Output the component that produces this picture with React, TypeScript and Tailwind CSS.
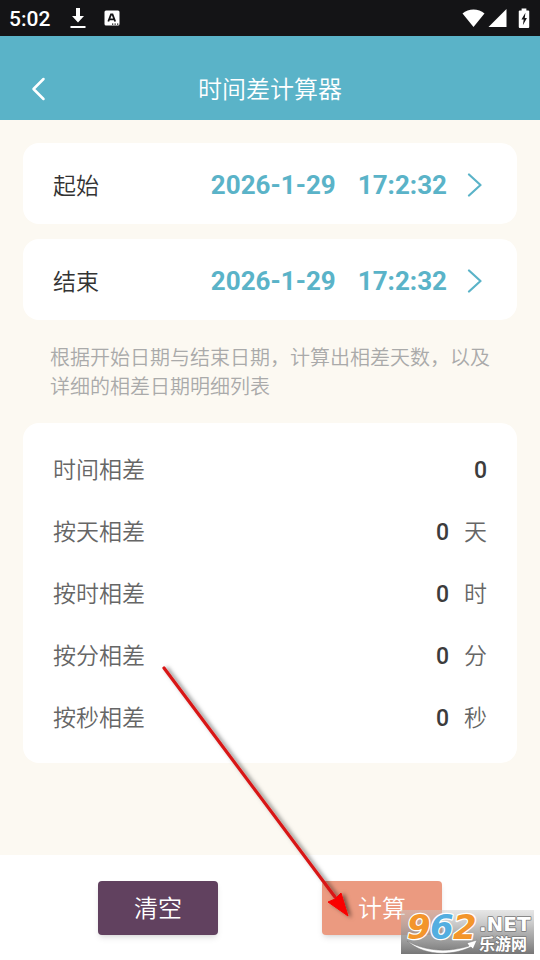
import React from "react";

type DateField = { id: string; label: string; date: string; time: string };
type ResultRow = { label: string; value: string; unit?: string };

const dateFields: DateField[] = [
  { id: "start", label: "起始", date: "2026-1-29", time: "17:2:32" },
  { id: "end", label: "结束", date: "2026-1-29", time: "17:2:32" },
];

const resultRows: ResultRow[] = [
  { label: "时间相差", value: "0" },
  { label: "按天相差", value: "0", unit: "天" },
  { label: "按时相差", value: "0", unit: "时" },
  { label: "按分相差", value: "0", unit: "分" },
  { label: "按秒相差", value: "0", unit: "秒" },
];

function StatusBar() {
  return (
    <div className="flex h-9 items-center justify-between bg-[#141416] pr-[10px] pl-[9px] text-white">
      <div className="flex items-center">
        <span className="pt-px text-[21px] leading-6 font-medium">5:02</span>
        <svg className="ml-5 h-5 w-4" viewBox="0 0 16 20" fill="currentColor" aria-hidden="true">
          <path d="M6 0h4v8h4l-6 6.500-6-6.500h4z" />
          <path d="M.500 18h15v2H.500z" />
        </svg>
        <svg className="ml-[18px] h-4 w-4" viewBox="0 0 16 16" aria-hidden="true">
          <rect x=".5" y=".5" width="15" height="15" rx="1.500" fill="#fff" />
          <path d="M4.300 11.500 7 4.500h1.500l2.700 7M5.500 9.300h4.500" fill="none" stroke="#141416" strokeWidth="1.800" />
          <path d="M8 13.500h1.300v1.300H8zM10.500 13.500h1.300v1.300h-1.300zM13 13.500h1.300v1.300H13z" fill="#141416" />
        </svg>
      </div>
      <div className="flex items-center">
        <svg className="h-5 w-[23px]" viewBox="0 0 23 20" fill="currentColor" aria-hidden="true">
          <path d="M.500 5.500C6.500.300 16.500.300 22.500 5.500L11.500 19z" />
        </svg>
        <svg className="ml-[3px] h-5 w-[19px]" viewBox="0 0 19 20" fill="currentColor" aria-hidden="true">
          <path d="M18.500 1v18H.500z" />
        </svg>
        <svg className="ml-[11px] h-5 w-3" viewBox="0 0 12 21" aria-hidden="true">
          <path d="M3.500.500h5v2h2c.600 0 1 .400 1 1V20c0 .600-.400 1-1 1h-9c-.600 0-1-.400-1-1V3.500c0-.600.400-1 1-1h2z" fill="#fff" />
          <path d="M7.500 5 3.300 12h2.400l-.900 6 4.300-7.400H6.800z" fill="#141416" />
        </svg>
      </div>
    </div>
  );
}

function Header() {
  return (
    <header className="grid h-[84px] grid-cols-[76px_1fr_76px] items-center bg-[#5ab3c8] pt-[22px] text-white">
      <button type="button" aria-label="返回" className="flex h-12 items-center justify-center">
        <svg className="h-6 w-[15px]" viewBox="0 0 15 24" fill="none" stroke="currentColor" strokeWidth="2.500" strokeLinecap="round" strokeLinejoin="round">
          <path d="M12.500 2 2.500 12l10 10" />
        </svg>
      </button>
      <h1 className="pt-[2px] text-center text-2xl font-[350]">时间差计算器</h1>
    </header>
  );
}

function DateCard({ id, label, date, time }: DateField) {
  return (
    <div className="flex h-[81px] items-baseline justify-between rounded-2xl bg-white pt-[26px] pr-[35px] pl-[30px]">
      <label htmlFor={id} className="text-[23px] leading-8 font-[350] text-[#333333]">
        {label}
      </label>
      <button id={id} type="button" className="flex items-center text-[26px] leading-8 font-bold text-[#5ab3c8]">
        <span>{date}</span>
        <span className="ml-[22px]">{time}</span>
        <svg className="ml-5 h-6 w-[15px]" viewBox="0 0 15 24" fill="none" stroke="currentColor" strokeWidth="2.200" strokeLinecap="round" strokeLinejoin="round" aria-hidden="true">
          <path d="M2 1.500 13.500 12 2 22.500" />
        </svg>
      </button>
    </div>
  );
}

function Results() {
  return (
    <dl className="mt-[21px] rounded-2xl bg-white px-[30px] pt-[17px] pb-[13px] text-[23px] font-[350] text-[#666666]">
      {resultRows.map((row) => (
        <div key={row.label} className="flex h-[62px] items-center justify-between">
          <dt>{row.label}</dt>
          <dd className="flex items-center">
            <span className="font-medium text-[#3c3c3c]">{row.value}</span>
            {row.unit && <span className="ml-[15px]">{row.unit}</span>}
          </dd>
        </div>
      ))}
    </dl>
  );
}

function Pointer() {
  return (
    <svg className="pointer-events-none absolute bottom-8 left-1/2 -ml-[116px] h-[268px] w-[204px]" viewBox="154 660 204 268" aria-hidden="true">
      <defs>
        <filter id="pointer-shadow" x="-10%" y="-10%" width="125%" height="125%">
          <feDropShadow dx="3" dy="1" stdDeviation="2" floodColor="#000" floodOpacity=".5" />
        </filter>
      </defs>
      <g filter="url(#pointer-shadow)">
        <path d="m164 668 171 229" stroke="#d81818" strokeWidth="3.200" strokeLinecap="round" />
        <path d="m348 916-20-14 7-3 6-6z" fill="#f90606" stroke="#f90606" strokeLinejoin="round" />
      </g>
    </svg>
  );
}

function Watermark() {
  return (
    <svg className="pointer-events-none absolute right-[6px] bottom-[6px] h-11 w-[133px] overflow-visible" viewBox="0 0 133 44" role="img" aria-label="962.NET 乐游网">
      <defs>
        <linearGradient id="mark-back" x2="0" y2="1">
          <stop stopColor="#c8c8c8" stopOpacity=".45" />
          <stop offset=".5" stopColor="#999" stopOpacity=".75" />
          <stop offset="1" stopColor="#777" />
        </linearGradient>
      </defs>
      <path d="M0 0h133v44H0z" fill="url(#mark-back)" />
      <g fontFamily="'DejaVu Sans', sans-serif" fontSize="34" fontWeight="700" fontStyle="italic" stroke="#fff" strokeWidth="2.500" strokeLinejoin="round" paintOrder="stroke">
        <text x="6" y="29" fill="#f3952b">9</text>
        <text x="29" y="29" fill="#53aee0">6</text>
        <text x="52" y="29" fill="#f3952b">2</text>
      </g>
      <path d="M6 31c18 10 40 12 62 5l-2-3 10-3-4 9-2-2C48 47 22 45 6 31z" fill="#fff" stroke="#777" strokeWidth=".5" />
      <g fill="#fff" stroke="#777" strokeWidth="1.500" strokeLinejoin="round" paintOrder="stroke">
        <text x="78" y="21" fontFamily="'DejaVu Sans', sans-serif" fontSize="20" fontWeight="700">.NET</text>
        <text x="78" y="40" fontFamily="'Noto Sans CJK SC', sans-serif" fontSize="16" fontWeight="700">乐游网</text>
      </g>
    </svg>
  );
}

export default function App() {
  return (
    <div className="relative flex min-h-screen flex-col overflow-hidden bg-[#fcf9f2] font-[Roboto,'Noto_Sans_CJK_SC',sans-serif]">
      <StatusBar />
      <Header />
      <main className="flex-1 px-[23px] pt-[23px] pb-8">
        <div className="flex flex-col gap-[15px]">
          {dateFields.map((field) => (
            <DateCard key={field.id} {...field} />
          ))}
        </div>
        <p className="mt-6 px-[27px] text-xl leading-[29px] font-[350] text-[#aaaaaa]">
          根据开始日期与结束日期，计算出相差天数，以及详细的相差日期明细列表
        </p>
        <Results />
      </main>
      <footer className="grid h-[105px] grid-cols-2 place-items-center bg-white px-[46px] text-2xl font-[350] text-white">
        <button type="button" className="h-[54px] w-[120px] rounded-sm bg-[#61415f] pt-[2px] shadow-md">
          清空
        </button>
        <button type="button" className="h-[54px] w-[120px] rounded-sm bg-[#eb9a80] pt-[2px] shadow-md">
          计算
        </button>
      </footer>
      <Pointer />
      <Watermark />
    </div>
  );
}
